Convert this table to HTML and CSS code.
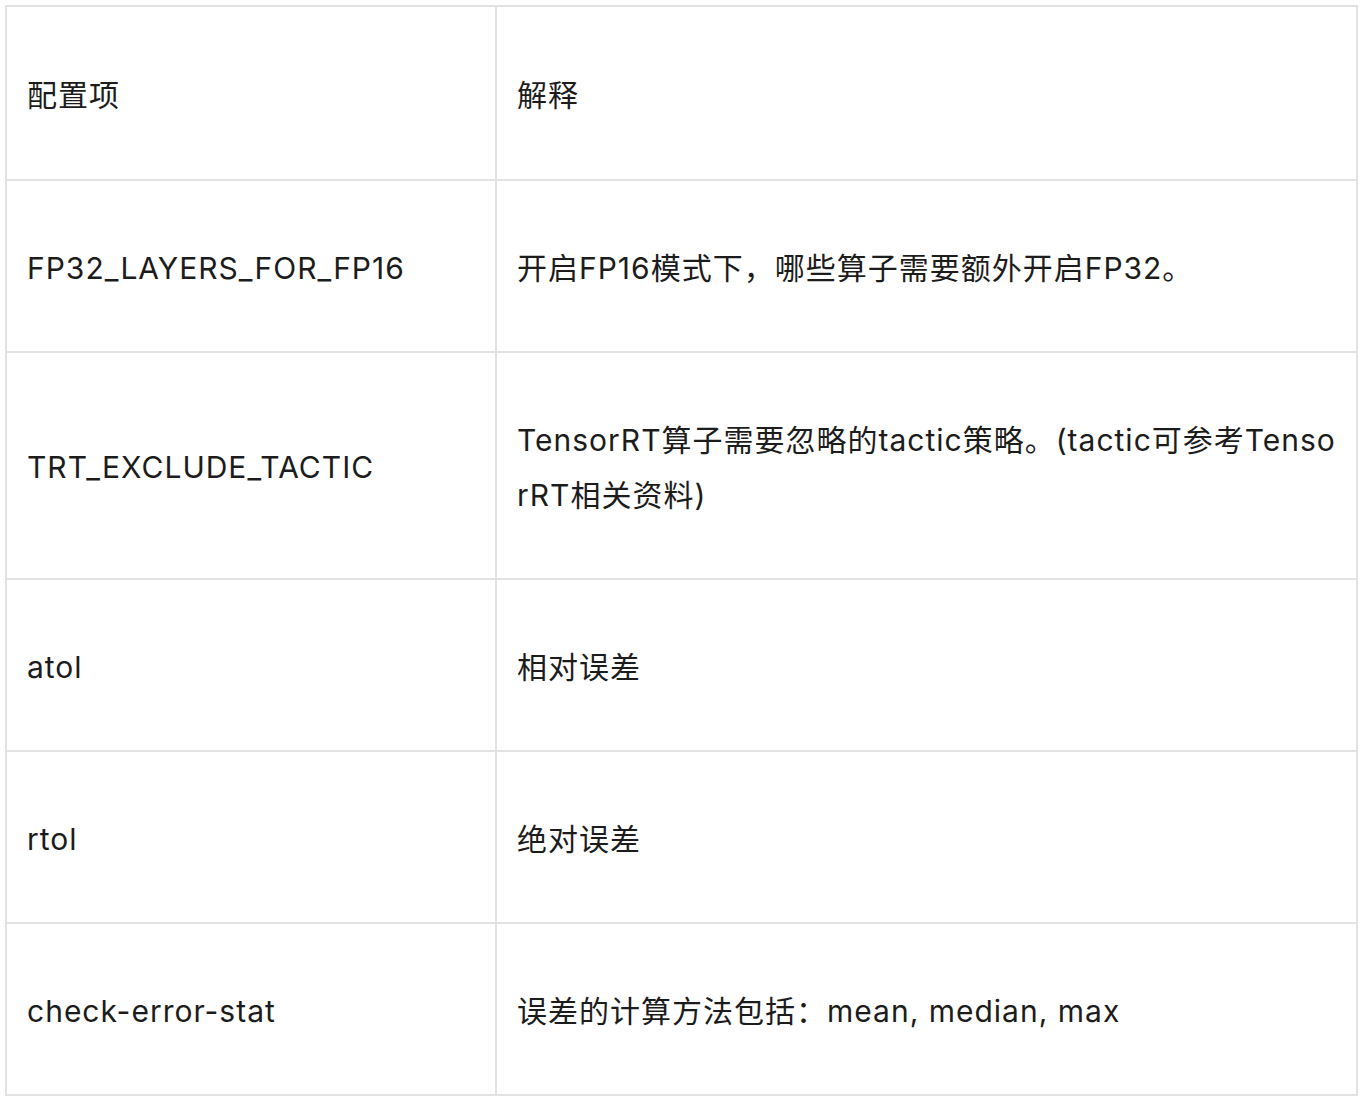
FILE: index.html
```html
<!DOCTYPE html>
<html lang="zh-CN">
<head>
<meta charset="utf-8">
<title>配置项</title>
<link rel="stylesheet" href="styles.css">
</head>
<body>
<table class="cfg">
  <colgroup><col class="c1"><col class="c2"></colgroup>
  <thead>
    <tr><th>配置项</th><th>解释</th></tr>
  </thead>
  <tbody>
    <tr><td>FP32_LAYERS_FOR_FP16</td><td>开启FP16模式下，哪些算子需要额外开启FP32。</td></tr>
    <tr><td>TRT_EXCLUDE_TACTIC</td><td>TensorRT算子需要忽略的tactic策略。(tactic可参考Tenso<br>rRT相关资料)</td></tr>
    <tr><td>atol</td><td>相对误差</td></tr>
    <tr><td>rtol</td><td>绝对误差</td></tr>
    <tr><td>check-error-stat</td><td>误差的计算方法包括：mean, median, max</td></tr>
  </tbody>
</table>
</body>
</html>
```
FILE: styles.css
```css
html, body { background: #ffffff; }
body {
  margin: 5px;
  font-family: Inter, "Noto Sans CJK SC", sans-serif;
  color: #1c1c1c;
}
.cfg {
  border-collapse: separate;
  border-spacing: 0;
  width: 1353px;
  table-layout: fixed;
  border-top: 2px solid #e2e2e2;
  border-left: 2px solid #e2e2e2;
}
.cfg .c1 { width: 490px; }
.cfg th, .cfg td {
  border-right: 2px solid #e2e2e2;
  border-bottom: 2px solid #e2e2e2;
  text-align: left;
  font-weight: normal;
  font-size: 30px;
  letter-spacing: 1px;
  line-height: 55px;
  padding: 59.5px 10px 55.5px 20px;
  vertical-align: middle;
  white-space: nowrap;
  overflow: hidden;
}
.cfg th { padding-top: 60.5px; padding-bottom: 56.5px; }
```
